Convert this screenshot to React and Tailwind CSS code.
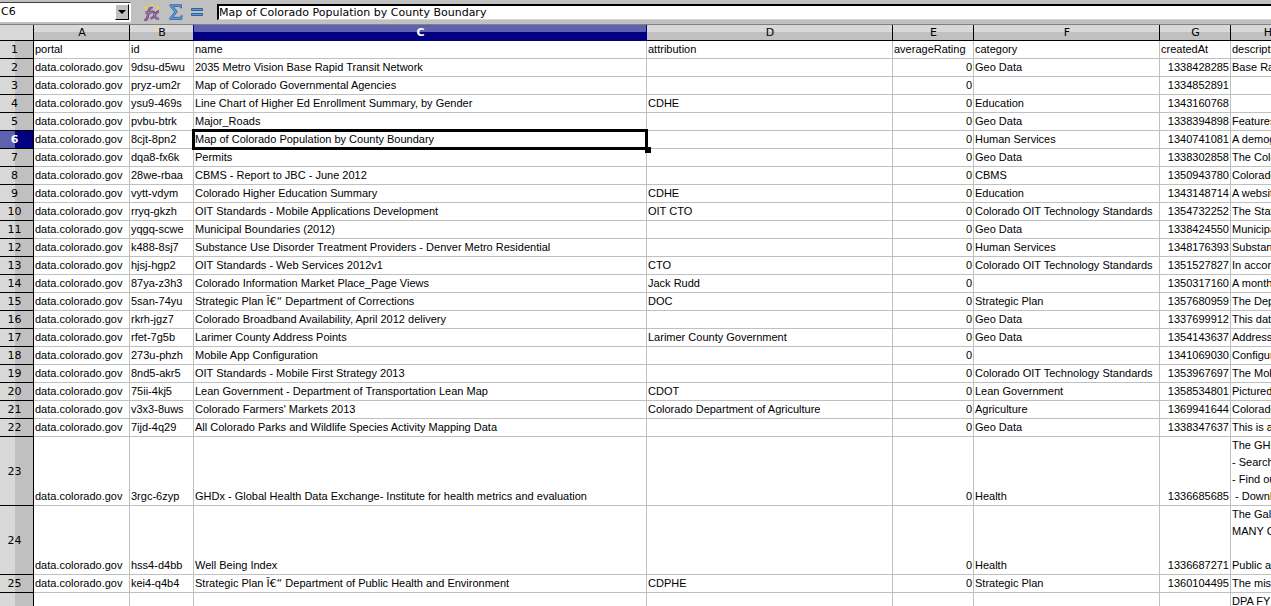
const COLUMNS = [
  { letter: "A", width: "w-[96px]" },
  { letter: "B", width: "w-[64px]" },
  { letter: "C", width: "w-[453px]" },
  { letter: "D", width: "w-[246px]" },
  { letter: "E", width: "w-[81px]" },
  { letter: "F", width: "w-[186px]" },
  { letter: "G", width: "w-[71px]" },
  { letter: "H", width: "w-[74px]" },
];

const PORTAL = "data.colorado.gov";
const OIT = "Colorado OIT Technology Standards";

// Wrongly decoded dash in some of the imported names
const GARBLED = "l̃€“";

// Each record: id, name, attribution, category, createdAt, description
const RECORDS = [
  ["9dsu-d5wu", "2035 Metro Vision Base Rapid Transit Network", "", "Geo Data", "1338428285", "Base Rapid"],
  ["pryz-um2r", "Map of Colorado Governmental Agencies", "", "", "1334852891", ""],
  ["ysu9-469s", "Line Chart of Higher Ed Enrollment Summary, by Gender", "CDHE", "Education", "1343160768", ""],
  ["pvbu-btrk", "Major_Roads", "", "Geo Data", "1338394898", "Features of"],
  ["8cjt-8pn2", "Map of Colorado Population by County Boundary", "", "Human Services", "1340741081", "A demographic"],
  ["dqa8-fx6k", "Permits", "", "Geo Data", "1338302858", "The Colorado"],
  ["28we-rbaa", "CBMS - Report to JBC - June 2012", "", "CBMS", "1350943780", "Colorado"],
  ["vytt-vdym", "Colorado Higher Education Summary", "CDHE", "Education", "1343148714", "A website"],
  ["rryq-gkzh", "OIT Standards - Mobile Applications Development", "OIT CTO", OIT, "1354732252", "The State"],
  ["yqgq-scwe", "Municipal Boundaries (2012)", "", "Geo Data", "1338424550", "Municipal"],
  ["k488-8sj7", "Substance Use Disorder Treatment Providers - Denver Metro Residential", "", "Human Services", "1348176393", "Substance"],
  ["hjsj-hgp2", "OIT Standards - Web Services 2012v1", "CTO", OIT, "1351527827", "In accordance"],
  ["87ya-z3h3", "Colorado Information Market Place_Page Views", "Jack Rudd", "", "1350317160", "A month by"],
  ["5san-74yu", `Strategic Plan ${GARBLED} Department of Corrections`, "DOC", "Strategic Plan", "1357680959", "The Department"],
  ["rkrh-jgz7", "Colorado Broadband Availability, April 2012 delivery", "", "Geo Data", "1337699912", "This data"],
  ["rfet-7g5b", "Larimer County Address Points", "Larimer County Government", "Geo Data", "1354143637", "Address"],
  ["273u-phzh", "Mobile App Configuration", "", "", "1341069030", "Configuration"],
  ["8nd5-akr5", "OIT Standards - Mobile First Strategy 2013", "", OIT, "1353967697", "The Mobile"],
  ["75ii-4kj5", "Lean Government - Department of Transportation Lean Map", "CDOT", "Lean Government", "1358534801", "Pictured"],
  ["v3x3-8uws", "Colorado Farmers' Markets 2013", "Colorado Department of Agriculture", "Agriculture", "1369941644", "Colorado"],
  ["7ijd-4q29", "All Colorado Parks and Wildlife Species Activity Mapping Data", "", "Geo Data", "1338347637", "This is a"],
  ["3rgc-6zyp", "GHDx - Global Health Data Exchange- Institute for health metrics and evaluation", "", "Health", "1336685685", "The GHDx\n- Search\n- Find out\n - Download"],
  ["hss4-d4bb", "Well Being Index", "", "Health", "1336687271", "The Gallup\nMANY Co\n \nPublic and"],
  ["kei4-q4b4", `Strategic Plan ${GARBLED} Department of Public Health and Environment`, "CDPHE", "Strategic Plan", "1360104495", "The mission"],
  ["", "", "", "", "", "DPA FY\n \n \n "],
];

const HEADINGS = ["portal", "id", "name", "attribution", "averageRating", "category", "createdAt", "description"];

const ROWS = [
  HEADINGS,
  ...RECORDS.map(([id, name, attribution, category, createdAt, description]) => [
    id ? PORTAL : "",
    id,
    name,
    attribution,
    id ? "0" : "",
    category,
    createdAt,
    description,
  ]),
];

const SELECTED_ROW = 6;
const SELECTED_COL = "C";

function FunctionIcon() {
  return (
    <svg width="18" height="18" viewBox="0 0 18 18" aria-hidden="true" fill="none">
      <path d="M1.5 16.5c2 .6 2.700-.8 3.200-3l1.300-6c.5-2 1.500-3 3.500-2.200M2.500 9.500h6" stroke="#6d4380" strokeWidth="2.600" />
      <path d="M8.500 9c2-.8 2.500 0 3.300 3s1.500 4.200 4 3.300M16 8.500c-2 0-3 1.500-4.300 3.500s-2 3.500-4.200 3.300" stroke="#6d4380" strokeWidth="2.400" />
      <path d="M2 16.300c1.600.3 2.200-1 2.700-3l1.300-6c.5-1.700 1.300-2.500 3-2M3 9.500h5M9 9.200c1.500-.5 2 .3 2.800 3s1.500 3.600 3.500 3M15.500 8.800c-1.700.2-2.500 1.500-3.800 3.300s-1.800 3-3.500 3" stroke="#b48ac0" strokeWidth=".8" />
      <path d="M3 2.500l.6 1.300 1.400.2-1 1 .2 1.400L3 5.800l-1.200.6L2 5 1 4l1.400-.2zM8.500 0l.5 1.200 1.300.2-.9.900.2 1.300-1.100-.6-1.200.6.200-1.300-.9-.9 1.400-.2zM14.500 2l.6 1.300 1.400.2-1 1 .2 1.400-1.200-.6-1.200.6.200-1.400-1-1 1.400-.2z" fill="#f5d327" />
    </svg>
  );
}

function SumIcon() {
  return (
    <svg width="14" height="16" viewBox="0 0 14 16" aria-hidden="true">
      <path d="M1 .7h11.500v3.300h-1c-.2-1-.7-1.500-1.800-1.500H4.300L8.400 7.700 3.800 13.300h6.200c1.200 0 1.700-.5 2-1.600h1.200l-.5 3.700H.8v-1.300L5.700 8 1 2z" fill="#5b9bdc" stroke="#2d62a0" strokeWidth=".8" />
    </svg>
  );
}

function EqualsIcon() {
  return (
    <svg width="12" height="8" viewBox="0 0 12 8" aria-hidden="true">
      <path d="M.5.5h11v2H.5zM.5 5.500h11v2H.5z" fill="#5b9bdc" stroke="#2d62a0" />
    </svg>
  );
}

function FormulaBar() {
  return (
    <div className="flex h-[25px] items-start border-b border-[#808080] bg-[#c0c0c0]">
      <div className="mt-[2px] flex h-[20px] w-[131px] shrink-0 border-y border-r border-t-[#404040] border-r-white border-b-white bg-white">
        <input
          aria-label="Name Box"
          defaultValue="C6"
          className="min-w-0 flex-1 bg-white pl-[1px] text-[11px] leading-[18px] outline-none"
        />
        <button
          type="button"
          aria-label="Choose a cell range"
          className="m-[1px] flex w-[14px] items-center justify-center border border-t-white border-r-black border-b-black border-l-white bg-[#c0c0c0]"
        >
          <svg width="8" height="4" viewBox="0 0 8 4" aria-hidden="true">
            <path d="M0 0h8L4 4z" fill="#000" />
          </svg>
        </button>
      </div>
      <div className="flex h-[24px] w-[86px] shrink-0 items-center gap-[8px] pl-[12px]">
        <button type="button" aria-label="Function Wizard">
          <FunctionIcon />
        </button>
        <button type="button" aria-label="Sum">
          <SumIcon />
        </button>
        <button type="button" aria-label="Function">
          <EqualsIcon />
        </button>
      </div>
      <input
        aria-label="Input line"
        defaultValue="Map of Colorado Population by County Boundary"
        className="mt-[4px] h-[16px] min-w-0 flex-1 border-t-2 border-b border-l-2 border-t-black border-b-[#d8d8d8] border-l-black bg-white text-[11px] leading-[13px] outline-none"
      />
    </div>
  );
}

function ColumnHeader({ letter, width }) {
  const selected = letter === SELECTED_COL;
  return (
    <th
      scope="col"
      className={`${width} h-[16px] border-r border-b py-0 pr-0 pl-[1px] text-[11px] leading-[15px] ${
        selected
          ? "border-r-[#000080] border-b-[#000080] bg-linear-to-b from-[#6060b0] from-50% to-[#000080] to-50% font-bold text-white"
          : `border-b-black bg-linear-to-b from-[#d8d8d8] from-50% to-[#c0c0c0] to-50% font-normal ${
              letter === "B" ? "border-r-[#000080]" : "border-r-black"
            }`
      }`}
    >
      {letter}
    </th>
  );
}

function CellText({ text }) {
  if (!text.includes(GARBLED)) return text;
  const [before, after] = text.split(GARBLED);
  return (
    <>
      {before}
      <span className="font-['DejaVu_Sans',sans-serif] leading-none">{GARBLED}</span>
      {after}
    </>
  );
}

function Row({ number, cells }) {
  const selected = number === SELECTED_ROW;
  return (
    <tr>
      <th
        scope="row"
        className={`border-r border-b border-black p-0 pr-[4px] text-[11px] leading-[17px] ${
          selected
            ? "bg-linear-to-r from-[#6060b0] from-45% to-[#000080] to-45% font-bold text-white"
            : "bg-linear-to-r from-[#d8d8d8] from-45% to-[#c0c0c0] to-45% font-normal"
        }`}
      >
        {number}
      </th>
      {cells.map((text, i) => {
        const { letter } = COLUMNS[i];
        const active = selected && letter === SELECTED_COL;
        const numeric = number > 1 && (letter === "E" || letter === "G");
        return (
          <td
            key={letter}
            className={`h-[18px] border-r border-b border-[#c0c0c0] px-[1px] py-0 align-bottom font-['Liberation_Sans',Arial,sans-serif] text-[11px] leading-[17px] whitespace-pre ${
              numeric ? "text-right" : "text-left"
            } ${active ? "relative" : "overflow-hidden"}`}
          >
            <CellText text={text} />
            {active && (
              <>
                <span className="absolute -inset-[2px] border-3 border-black" />
                <span className="absolute -right-[5px] -bottom-[5px] size-[6px] bg-black" />
              </>
            )}
          </td>
        );
      })}
    </tr>
  );
}

export default function App() {
  return (
    <div className="flex h-screen flex-col overflow-hidden bg-white font-['DejaVu_Sans',Verdana,sans-serif] text-black">
      <FormulaBar />
      <div className="min-h-0 flex-1 overflow-hidden">
        <table className="w-[1305px] table-fixed border-separate border-spacing-0">
          <thead>
            <tr>
              <td className="w-[34px] border-r border-b border-black bg-[#d8d8d8] p-0" />
              {COLUMNS.map((column) => (
                <ColumnHeader key={column.letter} {...column} />
              ))}
            </tr>
          </thead>
          <tbody>
            {ROWS.map((cells, i) => (
              <Row key={i} number={i + 1} cells={cells} />
            ))}
          </tbody>
        </table>
      </div>
    </div>
  );
}
